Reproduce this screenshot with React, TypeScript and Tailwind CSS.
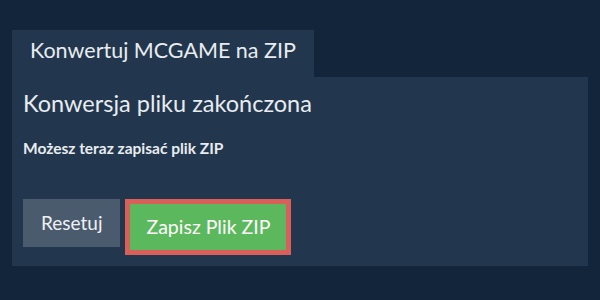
export default function App() {
  return (
    <div
      className="h-[300px] w-[600px] bg-[#12253a] px-3 pt-[30px]"
      style={{ fontFamily: "Lato, 'Noto Sans', sans-serif" }}
    >
      <div className="flex">
        <div className="bg-[#22374d] px-[18px] pt-[5px] pb-[12px] text-[21.5px] leading-[30px] text-[#e8ecf0]">
          Konwertuj MCGAME na ZIP
        </div>
      </div>
      <div className="h-[189px] bg-[#22374d] px-[11px] pt-[10px]">
        <h2 className="text-[23.5px] leading-[32px] text-[#e8ecf0]">
          Konwersja pliku zakończona
        </h2>
        <p className="mt-[19px] text-[15.5px] font-bold leading-[20px] text-[#e8ecf0]">
          Możesz teraz zapisać plik ZIP
        </p>
        <div className="mt-[41px] flex items-start gap-[5px]">
          <button className="h-[48px] bg-[#4b5b6e] px-[18px] text-[19px] text-[#eef1f4]">
            Resetuj
          </button>
          <button className="h-[56px] border-[5px] border-[#d9605a] bg-[#5cb85c] px-[16px] text-[19.5px] text-white">
            Zapisz Plik ZIP
          </button>
        </div>
      </div>
    </div>
  );
}
